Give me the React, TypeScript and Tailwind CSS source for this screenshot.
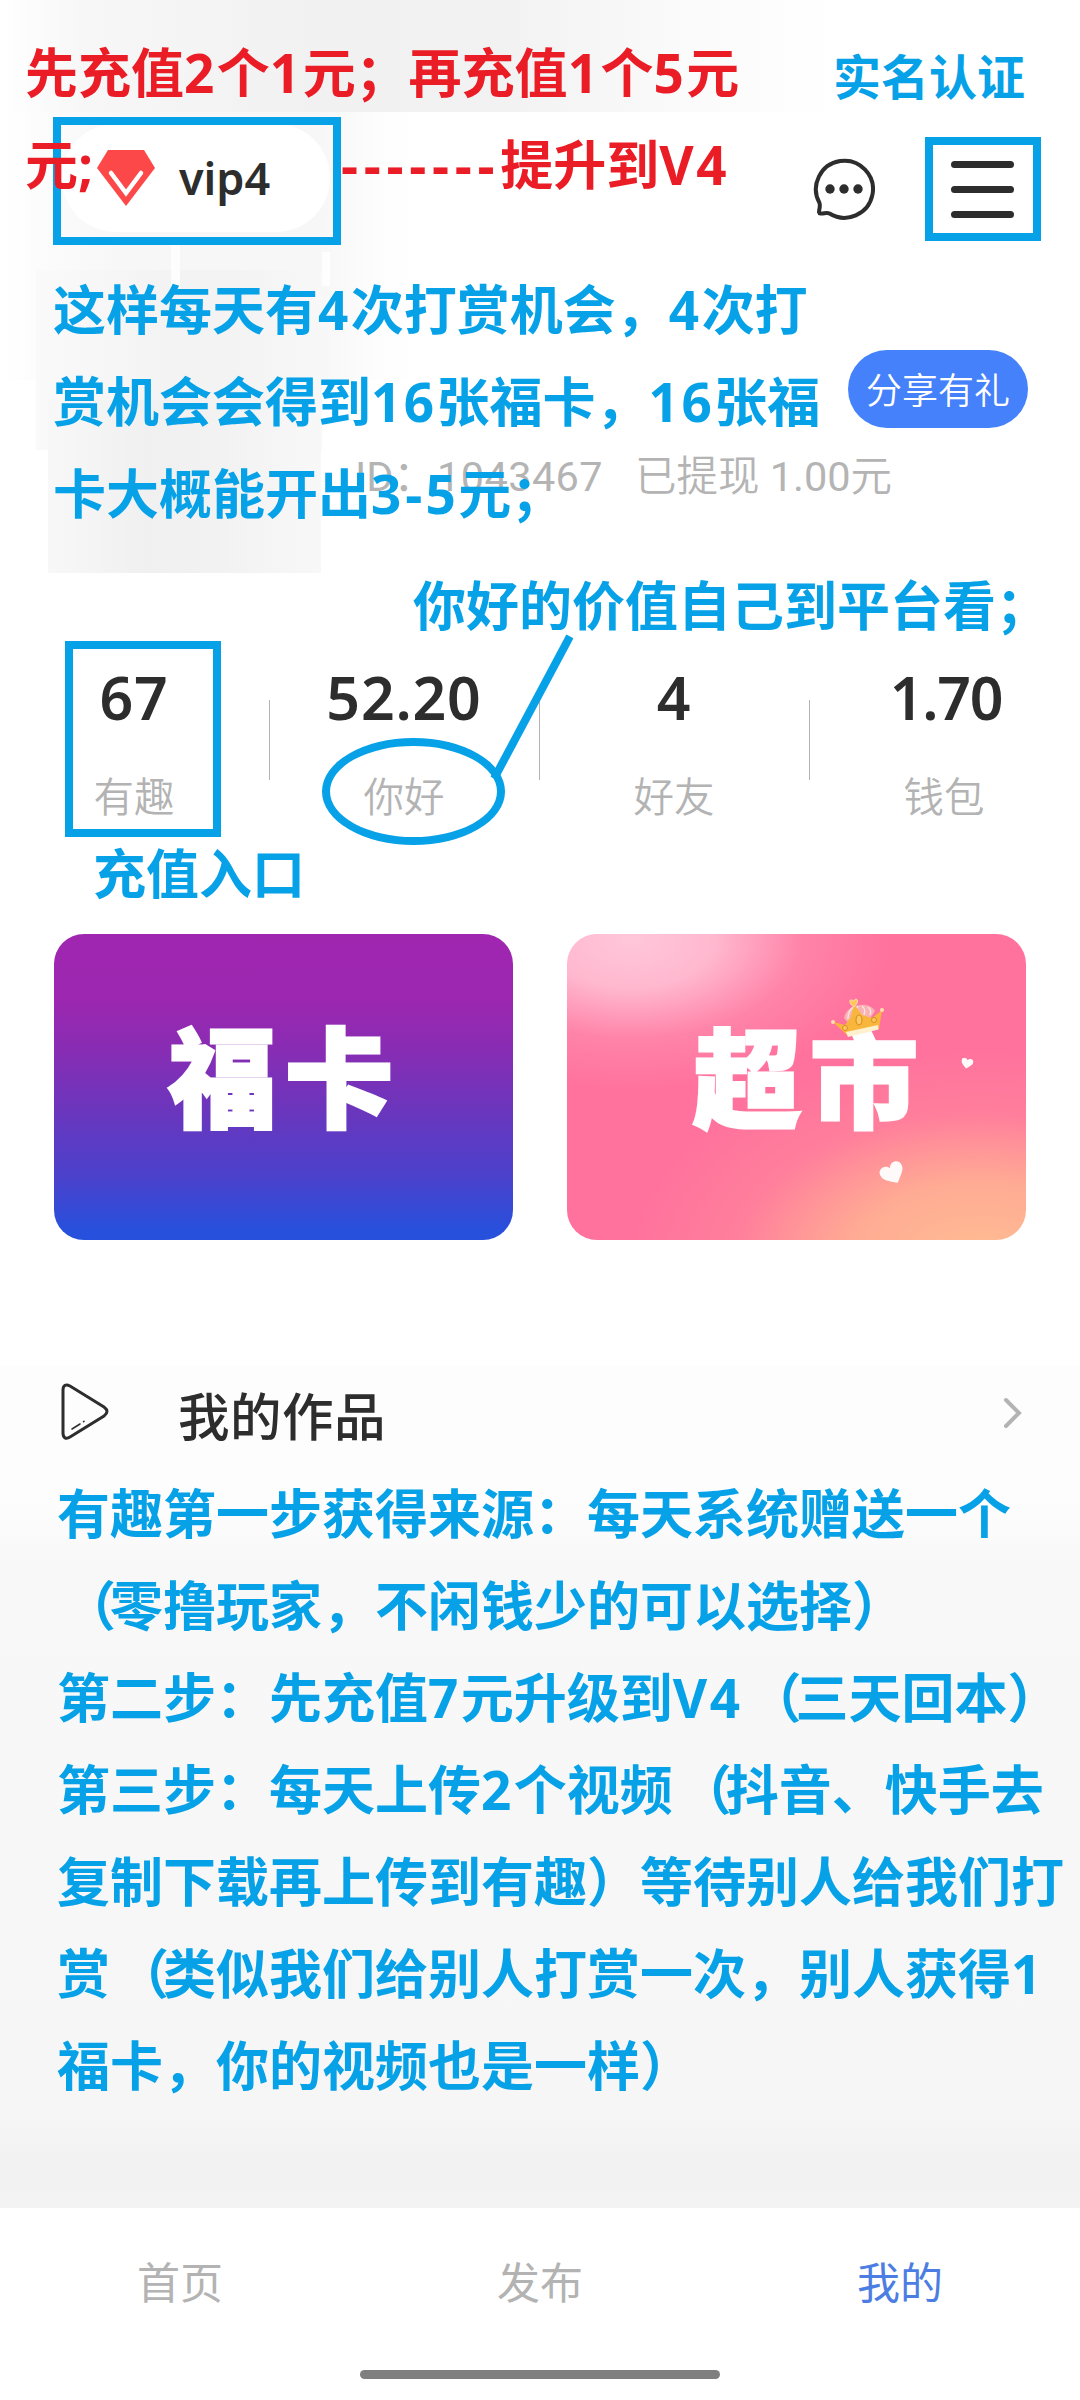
interface Stat {
  value: string
  label: string
  tracking: string
}

const STATS: Stat[] = [
  { value: '67', label: '有趣', tracking: 'tracking-[0.800px]' },
  { value: '52.20', label: '你好', tracking: 'tracking-[0.800px]' },
  { value: '4', label: '好友', tracking: 'tracking-[0.800px]' },
  { value: '1.70', label: '钱包', tracking: 'tracking-[-1.200px] pl-[4px]' },
]

const TABS = [
  { label: '首页', active: false },
  { label: '发布', active: false },
  { label: '我的', active: true },
]

const STEPS = [
  '有趣第一步获得来源：每天系统赠送一个',
  '（零撸玩家，不闲钱少的可以选择）',
  '第二步：先充值7元升级到V4（三天回本）',
  '第三步：每天上传2个视频（抖音、快手去',
  '复制下载再上传到有趣）等待别人给我们打',
  '赏（类似我们给别人打赏一次，别人获得1',
  '福卡，你的视频也是一样）',
]

function DiamondIcon() {
  return (
    <svg width="58" height="56" viewBox="0 0 58 56">
      <path d="M11 0H47L58 18L29 56L0 18Z" fill="#fd4849" />
      <path d="M14 23L29 43L44 23" fill="none" stroke="#fff" strokeWidth="4.5" strokeLinecap="round" />
    </svg>
  )
}

function ChatIcon() {
  return (
    <svg width="62" height="62" viewBox="0 0 62 62">
      <path
        d="M6.500 45A28.500 28.500 0 1 1 16.500 55.500C13 54 11 56 7.500 55.500C4 55 8 50 6.500 45Z"
        fill="none"
        stroke="#2d2d2d"
        strokeWidth="4"
        strokeLinejoin="round"
      />
      <circle cx="17" cy="31" r="4.700" fill="#2d2d2d" />
      <circle cx="31" cy="31" r="4.700" fill="#2d2d2d" />
      <circle cx="45" cy="31" r="4.700" fill="#2d2d2d" />
    </svg>
  )
}

function PlayIcon() {
  return (
    <svg width="48" height="57" viewBox="0 0 48 57" fill="none" stroke="#2d2d2d" strokeLinecap="round">
      <path
        d="M2 7C2 2 5 1 9 3L43 24C47 27 47 30 43 33L9 54C5 56.500 2 55 2 50Z"
        strokeWidth="3"
      />
      <path d="M11 46L19 41M22.500 38.700L23 38.300" strokeWidth="1.500" />
    </svg>
  )
}

function Crown() {
  return (
    <svg className="absolute left-[264px] top-[64px]" width="54" height="40" viewBox="0 0 54 40">
      <path d="M13 20C15 6 38 2 44 13L38 22L18 26Z" fill="#f7b3b4" />
      <path d="M17 21Q17 12 23 9M23 19Q24 11 27 8M33 17Q35 11 31 8M39 17Q41 12 37 9" fill="none" stroke="#ffdfe0" strokeWidth="1.500" />
      <path d="M2 24L14 27L20 19L23 6L31 17L41 20L51 12L48 31L17 38Z" fill="#f9b63c" />
      <path d="M15 34L47 27L47.500 31.500L17 39Z" fill="#fff0cf" />
      <ellipse cx="28" cy="22" rx="3" ry="5" fill="#fbc95d" stroke="#d88e27" strokeWidth="1.200" />
      <circle cx="14" cy="30" r="2.500" fill="#fbc95d" stroke="#d88e27" />
      <circle cx="43" cy="22" r="2.500" fill="#fbc95d" stroke="#d88e27" />
      <path d="M23 9C16 4 19 0 22.500 3C25 -1 30 2 23 9Z" fill="#ffc758" stroke="#ffe0ae" />
      <circle cx="2" cy="24" r="2" fill="#ffe0ae" />
      <circle cx="51" cy="12" r="2" fill="#ffe0ae" />
    </svg>
  )
}

function Heart({ className }: { className: string }) {
  return (
    <svg className={className} viewBox="0 0 24 22" fill="#fffafa">
      <path d="M12 21C5 15 0 12 0 6.500C0 0 9 -2 12 4.500C15 -2 24 0 24 6.500C24 12 19 15 12 21Z" />
    </svg>
  )
}

/* 数字、连字符和左括号的间距与汉字不同，单独处理 */
function spaced(text: string) {
  return text.split(/([\dV]+|-+|（)/).map((part, i) => {
    if (/^[\dV]/.test(part)) return <span key={i} className="tracking-[2.500px]">{part}</span>
    if (part === '-') return <span key={i} className="pl-[1.500px] pr-[3px]">{part}</span>
    if (part.startsWith('-')) return <span key={i} className="tracking-[5.700px]">{part}</span>
    if (part === '（') return <span key={i} className="pl-[6px] -mr-[6px]">{part}</span>
    return part
  })
}

/* 手写批注：浮在页面之上的单行文字 */
function Note({ className, size = 'text-[53px]', text }: { className: string; size?: string; text: string }) {
  return (
    <div
      className={`absolute whitespace-pre font-bold leading-[92px] ${size}
                  font-['Open_Sans','Noto_Sans_CJK_SC',sans-serif] ${className}`}
    >
      {spaced(text)}
    </div>
  )
}

function Backdrop() {
  return (
    <div className="absolute inset-x-0 top-0 h-[620px]">
      <div className="absolute left-0 top-0 w-[840px] h-[112px] bg-[linear-gradient(90deg,#ffffff_0%,#f7f7f7_10%,#f1f1f1_38%,#f2f2f2_60%,#fafafa_80%,#ffffff_100%)]" />
      <div className="absolute left-0 top-[112px] w-[420px] h-[268px] bg-[linear-gradient(90deg,#ffffff,#fbfbfb_12%,#f7f7f7_30%,#f7f7f7_76%,#fdfdfd_90%,#ffffff)]" />
      <div className="absolute left-[36px] top-[270px] w-[286px] h-[180px] bg-[linear-gradient(90deg,#fafafa,#f3f3f3_45%,#f3f3f3_70%,#f8f8f8)]" />
      <div className="absolute left-[48px] top-[400px] w-[273px] h-[173px] bg-[linear-gradient(90deg,#f8f8f8,#f0f0f0_36%,#f2f2f2_64%,#f8f8f8)]" />
      <div className="absolute left-[171px] top-[245px] w-[9px] h-[46px] bg-white/80" />
      <div className="absolute left-[322px] top-[252px] w-[8px] h-[34px] bg-white/80" />
    </div>
  )
}

function Annotations() {
  return (
    <div className="absolute inset-0 pointer-events-none text-[#06a1e7]">
      <div className="absolute left-[53px] top-[117px] w-[288px] h-[128px] border-8 border-[#06a1e7]" />
      <div className="absolute left-[925px] top-[137px] w-[116px] h-[104px] border-8 border-[#06a1e7]" />
      <div className="absolute left-[65px] top-[641px] w-[156px] h-[196px] border-8 border-[#06a1e7]" />
      <div className="absolute left-[322px] top-[738px] w-[183px] h-[107px] rounded-[50%] border-8 border-[#06a1e7]" />
      <svg className="absolute left-[485px] top-[630px]" width="95" height="155">
        <path d="M83 10L11 145" stroke="#06a1e7" strokeWidth="8" strokeLinecap="square" />
      </svg>

      <Note className="left-[25px] top-[27px] text-[#ea1d26]" text="先充值2个1元；再充值1个5元" />
      <Note className="left-[25px] top-[119px] text-[#ea1d26]" text="元;" />
      <Note className="left-[341px] top-[119px] text-[#ea1d26]" text="-------提升到V4" />
      <Note className="left-[833px] top-[31px]" size="text-[48px]" text="实名认证" />

      <Note className="left-[53px] top-[264px]" text="这样每天有4次打赏机会，4次打" />
      <Note className="left-[53px] top-[356px]" text="赏机会会得到16张福卡，16张福" />
      <Note className="left-[53px] top-[448px]" text="卡大概能开出3-5元；" />
      <Note className="left-[413px] top-[560px]" text="你好的价值自己到平台看；" />
      <Note className="left-[93px] top-[828px]" text="充值入口" />

      {STEPS.map((line, i) => (
        <div key={line} className="absolute left-0" style={{ top: 1468 + i * 92 }}>
          <Note className="left-[57px] top-0" text={line} />
        </div>
      ))}
    </div>
  )
}

export default function App() {
  return (
    <div className="relative w-[1080px] h-[2400px] overflow-hidden flex flex-col bg-white text-[#2d2d2d] font-['Noto_Sans','Noto_Sans_CJK_SC',sans-serif]">
      <Backdrop />

      {/* 顶部：会员等级与操作 */}
      <header className="relative flex justify-between mt-[124px] h-[110px] pl-[62px] pr-[66px]">
        <div className="flex items-center w-[268px] h-[108px] pl-[35px] rounded-[54px] bg-white">
          <DiamondIcon />
          <span className="ml-[24px] text-[45px] leading-[60px] font-semibold">vip4</span>
        </div>
        <div className="flex mt-[34px] gap-[76px]">
          <ChatIcon />
          <div className="flex flex-col gap-[18px] mt-[3px] w-[63px]">
            <i className="h-[7px] rounded-full bg-[#2d2d2d]" />
            <i className="h-[7px] rounded-full bg-[#2d2d2d]" />
            <i className="h-[7px] rounded-full bg-[#2d2d2d]" />
          </div>
        </div>
      </header>

      <section className="relative h-[443px] pt-[116px]">
        <button className="flex items-center justify-center ml-[848px] w-[180px] h-[78px] rounded-full bg-[#4481fb] text-white text-[36px] leading-[40px] pb-[2px] font-['Noto_Sans_CJK_SC',sans-serif] font-[350]">
          分享有礼
        </button>
        <div className="flex mt-[20px] pl-[355px] text-[41.500px] leading-[58px] whitespace-pre text-[#b4b4b4] font-[350] font-['Roboto','Noto_Sans_CJK_SC',sans-serif]">
          <span className="w-[82px] font-normal">ID：</span>
          <span className="w-[198px] font-normal tracking-[0.400px]">1043467</span>
          <span>已提现 </span>
          <span className="font-normal">1.00</span>
          <span>元</span>
        </div>
      </section>

      <section className="relative flex h-[257px]">
        {STATS.map((s, i) => (
          <div key={s.label} className="relative w-[270px] pr-[2px] text-center">
            <div className={`text-[59px] leading-[80px] -mt-[20px] font-semibold ${s.tracking}`}>{s.value}</div>
            <div className="mt-[30px] text-[40.500px] leading-[60px] font-[350] text-[#b3b3b3]">{s.label}</div>
            {i < 3 && <i className="absolute right-0 top-[23px] w-px h-[80px] bg-[#b3b3b3]" />}
          </div>
        ))}
      </section>

      <section className="relative flex gap-[54px] px-[54px] h-[306px] text-white text-[108px] leading-[160px] tracking-[9px] font-black font-['Noto_Sans_CJK_SC',sans-serif]">
        <div className="w-[459px] rounded-[30px] pt-[58px] pl-[114px] bg-[linear-gradient(180deg,#a026b0_0%,#9c27b0_22%,#8a2cb3_36%,#6a36bd_58%,#4a42cd_80%,#2750dc_97%)]">
          <span className="[-webkit-text-stroke:3px_white]">福卡</span>
        </div>
        <div className="relative w-[459px] rounded-[30px] pt-[59px] pl-[126px] bg-[radial-gradient(ellipse_260px_150px_at_14%_2%,#ffc6d9_0%,#ffb8cf_32%,#ff94b580_66%,#ff729d00_100%),radial-gradient(ellipse_350px_210px_at_90%_107%,#ffbe92_0%,#ffab94_38%,#ff8c9a80_70%,#ff729d00_100%)] bg-[#ff729d]">
          <span className="[-webkit-text-stroke:3px_white]">超市</span>
          <Crown />
          <Heart className="absolute left-[314px] top-[229px] w-[24px] h-[22px] -rotate-[28deg]" />
          <Heart className="absolute left-[394px] top-[124px] w-[12px] h-[11px] rotate-[12deg]" />
        </div>
      </section>

      <section className="relative mt-[126px] h-[842px] bg-[linear-gradient(180deg,#fdfdfd_0%,#fdfdfd_16%,#f8f8f8_24%,#f7f7f7_60%,#f6f6f6_88%,#f2f2f2_94%,#f3f3f3_100%)]">
        <div className="flex items-center h-[90px] pl-[61px] pr-[56px]">
          <PlayIcon />
          <h2 className="ml-[69px] text-[51.500px] leading-[70px] mt-[10px] font-medium tracking-[0.500px] flex-1">我的作品</h2>
          <svg width="22" height="34" viewBox="0 0 22 34" fill="none" stroke="#b3b3b3" strokeWidth="4">
            <path d="M4 6L17 19L4 32" strokeLinecap="round" />
          </svg>
        </div>
      </section>

      <nav className="relative flex h-[162px] bg-white">
        {TABS.map((t) => (
          <a
            key={t.label}
            className={`flex-1 pt-[45px] text-center text-[43px] leading-[60px] font-normal ${t.active ? 'text-[#4c7de2]' : 'text-[#b3b3b3]'}`}
          >
            {t.label}
          </a>
        ))}
      </nav>
      <i className="relative self-center w-[360px] h-[9px] rounded-full bg-[#7f7f7f]" />

      <Annotations />
    </div>
  )
}
